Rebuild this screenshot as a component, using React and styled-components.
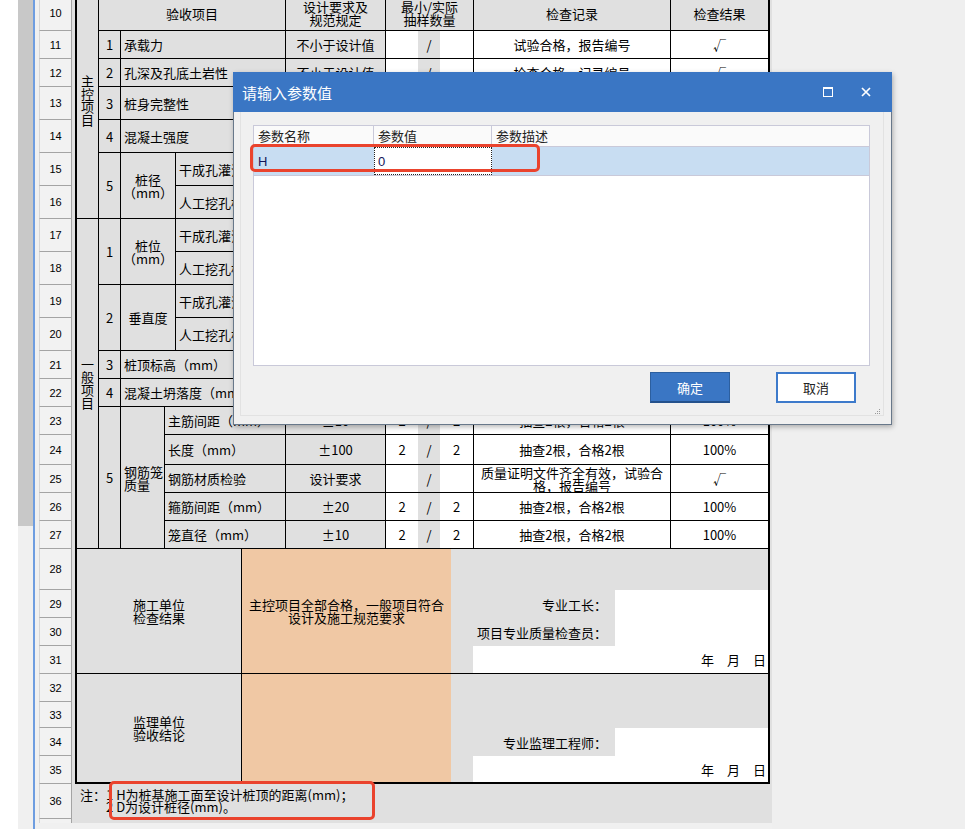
import React from 'react';
import styled, { createGlobalStyle } from 'styled-components';

const CJK = `"Noto Sans CJK SC", "Noto Sans", sans-serif`;
const GRAY = '#e0e0e0';
const WHITE = '#ffffff';
const ORANGE = '#f0c8a4';

const GlobalStyle = createGlobalStyle`
  html, body { margin: 0; padding: 0; background: #efefef; }
  body { font-family: ${CJK}; }
  * { box-sizing: border-box; }
`;

const Page = styled.div`
  position: relative;
  width: 965px;
  height: 829px;
  overflow: hidden;
  display: flex;
  background: #efefef;
`;

const LeftMargin = styled.div`
  width: 18px;
  flex: none;
  background: #ffffff;
`;

const VScroll = styled.div`
  width: 15px;
  flex: none;
  background: #f0f0f0;
`;

const Thumb = styled.div`
  height: 526px;
  background: #c8c8c8;
`;

const SheetEdge = styled.div`
  width: 2px;
  flex: none;
  background: #6e9de0;
`;

const SheetPad = styled.div`
  width: 4px;
  flex: none;
  background: #f0f0f0;
`;

const SheetArea = styled.div`
  width: 733px;
  flex: none;
  display: flex;
  flex-direction: column;
`;

const SheetView = styled.div`
  height: 823px;
  flex: none;
  display: flex;
  overflow: hidden;
`;

const HStrip = styled.div`
  flex: 1;
  background: #f0f0f0;
`;

const RowHeader = styled.div`
  width: 33px;
  flex: none;
  display: flex;
  flex-direction: column;
  background: #f2f2f2;
`;

const RowNum = styled.div`
  height: ${p => p.$h}px;
  flex: none;
  border-left: 1px solid #d6d6d6;
  border-right: 1px solid #a4a4a4;
  border-bottom: 1px solid #a4a4a4;
  display: flex;
  align-items: center;
  justify-content: center;
  padding-bottom: ${p => p.$pb || 0}px;
  font: 11px "Liberation Sans", Arial, sans-serif;
  color: #000;
`;

const Canvas = styled.div`
  width: 700px;
  flex: none;
  background: ${GRAY};
  padding-left: 3px;
  display: flex;
  flex-direction: column;
`;

const Frame = styled.div`
  width: 695px;
  border-left: 2px solid #000;
  border-right: 2px solid #000;
  border-bottom: 2px solid #000;
`;

const UpperGrid = styled.div`
  display: grid;
  grid-template-columns: 22px 22px 44px 11px 110px 100px 32px 22px 34px 197px 97px;
  grid-template-rows: 31px 28px 28px 33px 33px 33px 33px 33px 33px 33px 33px 28px 28px 28px 30px 28px 28px 28px;
`;

const LowerGrid = styled.div`
  display: grid;
  grid-template-columns: 165px 209px 22px 142px 153px;
  grid-template-rows: 41px 28px 28px 28px 28px 26px 28px 26px;
`;

const Cell = styled.div`
  grid-column: ${p => p.$c};
  grid-row: ${p => p.$r};
  background: ${p => p.$bg || GRAY};
  border-right: ${p => (p.$nr ? '0' : '1px solid #000')};
  border-bottom: ${p => (p.$nb ? '0' : '1px solid #000')};
  display: flex;
  align-items: center;
  justify-content: ${p =>
    p.$align === 'left' ? 'flex-start' : p.$align === 'right' ? 'flex-end' : 'center'};
  text-align: ${p => p.$align || 'center'};
  padding: 0 ${p => p.$pr || 0}px ${p => p.$pb || 0}px ${p => p.$pl || 0}px;
  font-family: ${CJK};
  font-size: 13px;
  line-height: 13px;
  white-space: pre-line;
  overflow: hidden;
  color: #000;
`;

const VText = styled.span`
  writing-mode: vertical-rl;
  text-orientation: upright;
  line-height: 13px;
`;

const Note = styled.div`
  height: 40px;
  flex: none;
  padding: 5px 0 0 5px;
  font-family: ${CJK};
  font-size: 13px;
  line-height: 12px;
  white-space: pre;
  color: #000;
`;

/* ---------- dialog ---------- */

const Dialog = styled.div`
  position: absolute;
  left: 233px;
  top: 72px;
  width: 659px;
  display: flex;
  flex-direction: column;
  box-shadow: 1px 2px 5px rgba(0, 0, 0, 0.28);
  font-family: ${CJK};
`;

const TitleBar = styled.div`
  height: 40px;
  background: #3a76c4;
  display: flex;
  align-items: center;
  padding: 0 7px 0 9px;
  color: #fff;
  font-size: 15px;
`;

const TitleText = styled.div`
  flex: 1;
  line-height: 1;
`;

const TitleBtn = styled.div`
  width: 38px;
  height: 40px;
  display: flex;
  align-items: center;
  justify-content: center;
`;

const DialogBody = styled.div`
  position: relative;
  background: #f0f0f0;
  border: 1px solid #68788a;
  border-top: 0;
  padding: 0 7px 8px 6px;
`;

const Panel = styled.div`
  height: 304px;
  border: 1px solid #e2e2e2;
  border-top: 0;
  padding: 13px 13px 0 12px;
  display: flex;
  flex-direction: column;
`;

const ParamGrid = styled.div`
  height: 241px;
  flex: none;
  border: 1px solid #c9c9d9;
  background: #fff;
  display: flex;
  flex-direction: column;
`;

const GridHead = styled.div`
  display: grid;
  grid-template-columns: 120px 118px 1fr;
  height: 21px;
  background: #fafafa;
  border-bottom: 1px solid #c9c9d9;
`;

const HeadCell = styled.div`
  border-right: ${p => (p.$last ? '0' : '1px solid #c9c9d9')};
  padding-left: 4px;
  font-size: 13px;
  line-height: 20px;
  color: #222;
`;

const GridRow = styled.div`
  display: grid;
  grid-template-columns: 120px 118px 1fr;
  height: 29px;
  background: #c8ddf2;
  border-bottom: 1px solid #c9c9d9;
`;

const DataCell = styled.div`
  display: flex;
  align-items: center;
  padding-left: ${p => (p.$edit ? 3 : 4)}px;
  font-family: "Liberation Sans", Arial, sans-serif;
  font-size: 13px;
  color: #14145a;
  background: ${p => (p.$edit ? '#fff' : 'transparent')};
  border: ${p => (p.$edit ? '1px dotted #222' : '0')};
`;

const ButtonRow = styled.div`
  display: flex;
  justify-content: flex-end;
  gap: 46px;
  margin-top: 6px;
  padding-right: 14px;
`;

const Btn = styled.button`
  width: 80px;
  height: 31px;
  font-family: ${CJK};
  font-size: 13px;
  padding: 0;
  cursor: pointer;
  background: ${p => (p.$primary ? '#3a76c4' : '#ffffff')};
  color: ${p => (p.$primary ? '#ffffff' : '#222')};
  border: ${p => (p.$primary ? '1px solid #2c5f9f' : '2px solid #3d7acb')};
  border-bottom: ${p => (p.$primary ? '2px solid #24518c' : '2px solid #3d7acb')};
`;

const Grip = styled.svg`
  position: absolute;
  right: 10px;
  bottom: 9px;
`;

const Mark = styled.div`
  position: absolute;
  left: ${p => p.$x}px;
  top: ${p => p.$y}px;
  width: ${p => p.$w}px;
  height: ${p => p.$h}px;
  border: 3px solid #ea432d;
  border-radius: 5px;
  pointer-events: none;
`;

/* ---------- data ---------- */

const rowNums = [
  [10, 31], [11, 28], [12, 28], [13, 33], [14, 33], [15, 33], [16, 33], [17, 33], [18, 33],
  [19, 33], [20, 33], [21, 28], [22, 28], [23, 28], [24, 30], [25, 28], [26, 28], [27, 28],
  [28, 41], [29, 28], [30, 28], [31, 28], [32, 28], [33, 26], [34, 28], [35, 28], [36, 35], [37, 30],
];

const values = [
  ['不小于设计值', '', '', '试验合格，报告编号', '√'],
  ['不小于设计值', '', '', '检查合格，记录编号', '√'],
  ['按设计要求', '', '', '检测合格，报告编号', '√'],
  ['不小于设计值', '', '', '试验合格，报告编号', '√'],
  ['≥0', '2', '2', '抽查2根，合格2根', '100%'],
  ['≥0', '2', '2', '抽查2根，合格2根', '100%'],
  ['≤100', '2', '2', '抽查2根，合格2根', '100%'],
  ['≤50', '2', '2', '抽查2根，合格2根', '100%'],
  ['＜1%', '2', '2', '抽查2根，合格2根', '100%'],
  ['＜0.5%', '2', '2', '抽查2根，合格2根', '100%'],
  ['+30，-50', '2', '2', '抽查2根，合格2根', '100%'],
  ['160~220', '2', '2', '抽查2次，合格2次', '100%'],
  ['±10', '2', '2', '抽查2根，合格2根', '100%'],
  ['±100', '2', '2', '抽查2根，合格2根', '100%'],
  ['设计要求', '', '', '质量证明文件齐全有效，试验合\n格，报告编号', '√'],
  ['±20', '2', '2', '抽查2根，合格2根', '100%'],
  ['±10', '2', '2', '抽查2根，合格2根', '100%'],
];

function ValueCells() {
  return values.map(([d, mn, act, rec, res], i) => {
    const r = i + 2;
    return (
      <React.Fragment key={r}>
        <Cell $c="6" $r={r}>{d}</Cell>
        <Cell $c="7" $r={r} $bg={WHITE} $nr>{mn}</Cell>
        <Cell $c="8" $r={r} $nr>/</Cell>
        <Cell $c="9" $r={r} $bg={WHITE}>{act}</Cell>
        <Cell $c="10" $r={r} $bg={WHITE}>{rec}</Cell>
        <Cell $c="11" $r={r} $bg={WHITE} $nr>{res}</Cell>
      </React.Fragment>
    );
  });
}

function UpperTable() {
  return (
    <UpperGrid>
      <Cell $c="1" $r="1 / 8" $pb={16}><VText>主控项目</VText></Cell>
      <Cell $c="2 / 6" $r="1" $pb={4}>验收项目</Cell>
      <Cell $c="6" $r="1" $pb={4}>{'设计要求及\n规范规定'}</Cell>
      <Cell $c="7 / 10" $r="1" $pb={4}>{'最小/实际\n抽样数量'}</Cell>
      <Cell $c="10" $r="1" $pb={4}>检查记录</Cell>
      <Cell $c="11" $r="1" $pb={4} $nr>检查结果</Cell>

      <Cell $c="2" $r="2">1</Cell>
      <Cell $c="3 / 6" $r="2" $align="left" $pl={3}>承载力</Cell>
      <Cell $c="2" $r="3">2</Cell>
      <Cell $c="3 / 6" $r="3" $align="left" $pl={3}>孔深及孔底土岩性</Cell>
      <Cell $c="2" $r="4">3</Cell>
      <Cell $c="3 / 6" $r="4" $align="left" $pl={3}>桩身完整性</Cell>
      <Cell $c="2" $r="5">4</Cell>
      <Cell $c="3 / 6" $r="5" $align="left" $pl={3}>混凝土强度</Cell>
      <Cell $c="2" $r="6 / 8">5</Cell>
      <Cell $c="3 / 5" $r="6 / 8">{'桩径\n（mm）'}</Cell>
      <Cell $c="5" $r="6" $align="left" $pl={3}>干成孔灌注桩</Cell>
      <Cell $c="5" $r="7" $align="left" $pl={3}>人工挖孔桩</Cell>

      <Cell $c="1" $r="8 / 19"><VText>一般项目</VText></Cell>
      <Cell $c="2" $r="8 / 10">1</Cell>
      <Cell $c="3 / 5" $r="8 / 10">{'桩位\n（mm）'}</Cell>
      <Cell $c="5" $r="8" $align="left" $pl={3}>干成孔灌注桩</Cell>
      <Cell $c="5" $r="9" $align="left" $pl={3}>人工挖孔桩</Cell>
      <Cell $c="2" $r="10 / 12">2</Cell>
      <Cell $c="3 / 5" $r="10 / 12">垂直度</Cell>
      <Cell $c="5" $r="10" $align="left" $pl={3}>干成孔灌注桩</Cell>
      <Cell $c="5" $r="11" $align="left" $pl={3}>人工挖孔桩</Cell>
      <Cell $c="2" $r="12">3</Cell>
      <Cell $c="3 / 6" $r="12" $align="left" $pl={3}>桩顶标高（mm）</Cell>
      <Cell $c="2" $r="13">4</Cell>
      <Cell $c="3 / 6" $r="13" $align="left" $pl={3}>混凝土坍落度（mm）</Cell>
      <Cell $c="2" $r="14 / 19">5</Cell>
      <Cell $c="3" $r="14 / 19" $align="left" $pl={3}>钢筋笼质量</Cell>
      <Cell $c="4 / 6" $r="14" $align="left" $pl={3}>主筋间距（mm）</Cell>
      <Cell $c="4 / 6" $r="15" $align="left" $pl={3}>长度（mm）</Cell>
      <Cell $c="4 / 6" $r="16" $align="left" $pl={3}>钢筋材质检验</Cell>
      <Cell $c="4 / 6" $r="17" $align="left" $pl={3}>箍筋间距（mm）</Cell>
      <Cell $c="4 / 6" $r="18" $align="left" $pl={3}>笼直径（mm）</Cell>

      <ValueCells />
    </UpperGrid>
  );
}

const DATE = '年　月　日';

function LowerTable() {
  return (
    <LowerGrid>
      <Cell $c="1" $r="1 / 5">{'施工单位\n检查结果'}</Cell>
      <Cell $c="2" $r="1 / 5" $bg={ORANGE} $nr>
        {'主控项目全部合格，一般项目符合\n设计及施工规范要求'}
      </Cell>
      <Cell $c="3 / 6" $r="1" $nr $nb />
      <Cell $c="3 / 5" $r="2" $nr $nb $align="right" $pr={8}>专业工长：</Cell>
      <Cell $c="5" $r="2" $bg={WHITE} $nr $nb />
      <Cell $c="3 / 5" $r="3" $nr $nb $align="right" $pr={8}>项目专业质量检查员：</Cell>
      <Cell $c="5" $r="3" $bg={WHITE} $nr $nb />
      <Cell $c="3" $r="4" $nr />
      <Cell $c="4 / 6" $r="4" $bg={WHITE} $nr $align="right" $pr={2}>{DATE}</Cell>

      <Cell $c="1" $r="5 / 9" $nb>{'监理单位\n验收结论'}</Cell>
      <Cell $c="2" $r="5 / 9" $bg={ORANGE} $nr $nb />
      <Cell $c="3 / 6" $r="5 / 7" $nr $nb />
      <Cell $c="3 / 5" $r="7" $nr $nb $align="right" $pr={8}>专业监理工程师：</Cell>
      <Cell $c="5" $r="7" $bg={WHITE} $nr $nb />
      <Cell $c="3" $r="8" $nr $nb />
      <Cell $c="4 / 6" $r="8" $bg={WHITE} $nr $nb $align="right" $pr={2}>{DATE}</Cell>
    </LowerGrid>
  );
}

function ParamDialog() {
  return (
    <Dialog>
      <TitleBar>
        <TitleText>请输入参数值</TitleText>
        <TitleBtn>
          <svg width="10" height="10" viewBox="0 0 10 10">
            <rect x="0.5" y="0.5" width="9" height="9" fill="none" stroke="#fff" strokeWidth="1" />
            <line x1="0" y1="1.5" x2="10" y2="1.5" stroke="#fff" strokeWidth="1" />
          </svg>
        </TitleBtn>
        <TitleBtn>
          <svg width="10" height="10" viewBox="0 0 10 10">
            <path d="M1 1 L9 9 M9 1 L1 9" stroke="#fff" strokeWidth="1.7" />
          </svg>
        </TitleBtn>
      </TitleBar>
      <DialogBody>
        <Panel>
          <ParamGrid>
            <GridHead>
              <HeadCell>参数名称</HeadCell>
              <HeadCell>参数值</HeadCell>
              <HeadCell $last>参数描述</HeadCell>
            </GridHead>
            <GridRow>
              <DataCell>H</DataCell>
              <DataCell $edit>0</DataCell>
              <DataCell />
            </GridRow>
          </ParamGrid>
          <ButtonRow>
            <Btn $primary>确定</Btn>
            <Btn>取消</Btn>
          </ButtonRow>
        </Panel>
        <Grip width="6" height="6" viewBox="0 0 6 6">
          <g fill="#9a9a9a">
            <rect x="4" y="0" width="1" height="1" />
            <rect x="2" y="2" width="1" height="1" />
            <rect x="4" y="2" width="1" height="1" />
            <rect x="0" y="4" width="1" height="1" />
            <rect x="2" y="4" width="1" height="1" />
            <rect x="4" y="4" width="1" height="1" />
          </g>
        </Grip>
      </DialogBody>
    </Dialog>
  );
}

export default function App() {
  return (
    <>
      <GlobalStyle />
      <Page>
        <LeftMargin />
        <VScroll>
          <Thumb />
        </VScroll>
        <SheetEdge />
        <SheetPad />
        <SheetArea>
          <SheetView>
            <RowHeader>
              {rowNums.map(([n, h]) => (
                <RowNum key={n} $h={h} $pb={n === 10 ? 4 : 0}>
                  {n}
                </RowNum>
              ))}
            </RowHeader>
            <Canvas>
              <Frame>
                <UpperTable />
                <LowerTable />
              </Frame>
              <Note>{'注：1 H为桩基施工面至设计桩顶的距离(mm)；\n　　2 D为设计桩径(mm)。'}</Note>
            </Canvas>
          </SheetView>
          <HStrip />
        </SheetArea>
        <ParamDialog />
        <Mark $x={250} $y={144} $w={290} $h={28} />
        <Mark $x={109} $y={781} $w={266} $h={39} />
      </Page>
    </>
  );
}
